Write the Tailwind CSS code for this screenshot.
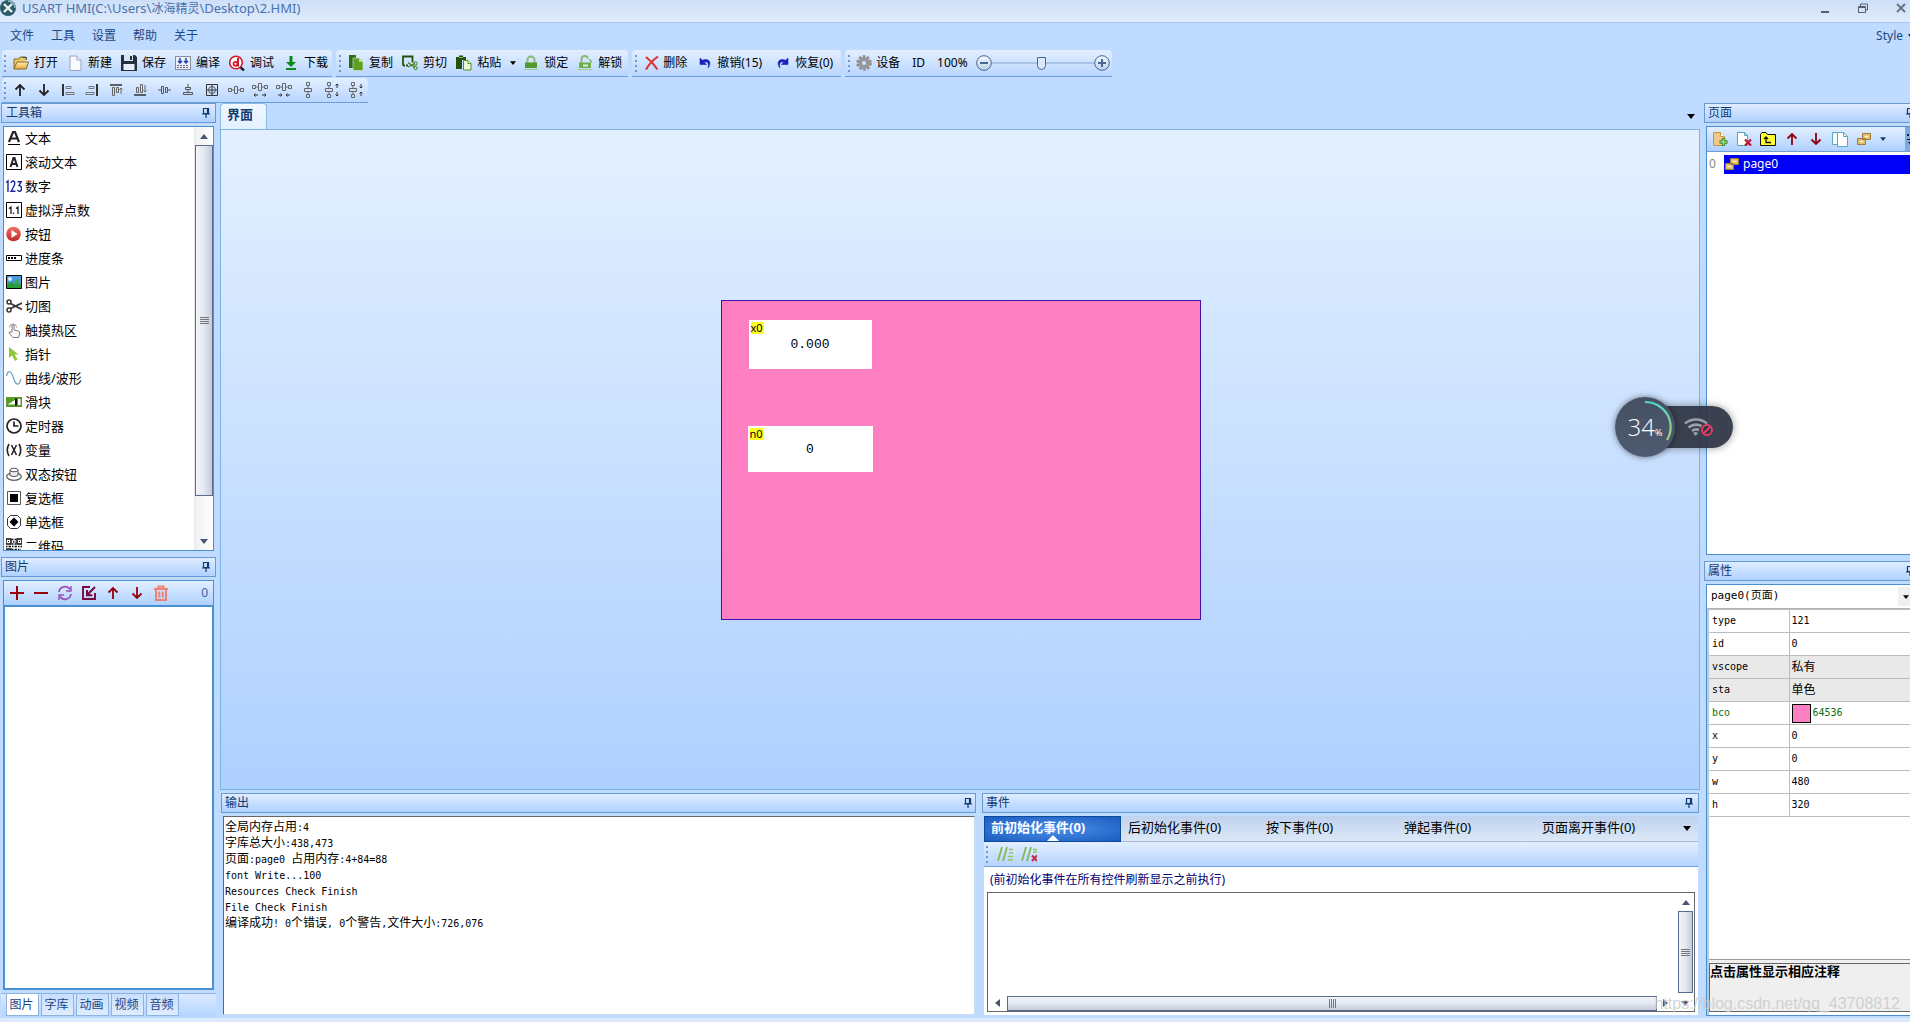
<!DOCTYPE html>
<html lang="zh-CN">
<head>
<meta charset="utf-8">
<title>USART HMI</title>
<script src="https://cdn.jsdelivr.net/npm/@tailwindcss/browser@4"></script>
</head>
<body class="h-screen overflow-hidden bg-[#bfdbff] font-['Noto_Sans','Noto_Sans_CJK_SC',sans-serif] text-xs text-black">

<svg class="absolute h-0 w-0" aria-hidden="true">
  <defs>
    <linearGradient id="g-folder" x1="0" y1="0" x2="0" y2="1"><stop offset="0" stop-color="#fff0b0"/><stop offset="1" stop-color="#e8a83a"/></linearGradient>
    <linearGradient id="g-red" x1="0" y1="0" x2="0" y2="1"><stop offset="0" stop-color="#f07068"/><stop offset="1" stop-color="#c02828"/></linearGradient>
    <linearGradient id="g-knob" x1="0" y1="0" x2="0" y2="1"><stop offset="0" stop-color="#f4f9ff"/><stop offset="1" stop-color="#bcd0ea"/></linearGradient>
    <linearGradient id="g-arc" x1="0" y1="0" x2="0" y2="1"><stop offset="0" stop-color="#4fd8c8"/><stop offset="1" stop-color="#a8d070"/></linearGradient>
  </defs>
  <symbol id="pin" viewBox="0 0 8 10"><path d="M1.5 0.5h5v5h-5zM5.5 0.5v5M0 6h8M4 6v4" fill="none" stroke="#123a70" stroke-width="1.2"/></symbol>
  <symbol id="open" viewBox="0 0 16 16"><path d="M1 14V4h5l1-2h6v3" fill="#f0c860" stroke="#8a6a28"/><path d="M1 14 4 7h11.5L13 14z" fill="url(#g-folder)" stroke="#8a6a28"/><path d="M9 2.5h4.500v2" fill="none" stroke="#555"/></symbol>
  <symbol id="new" viewBox="0 0 16 16"><path d="M3 1h7l4 4v10.500H3z" fill="#f8faff" stroke="#9aa6bb"/><path d="M10 1v4h4" fill="#fff" stroke="#9aa6bb"/></symbol>
  <symbol id="save" viewBox="0 0 16 16"><path d="M0 0h14l2 2v14H0z" fill="#26303c"/><path d="M3 0h9v6H3z" fill="#d6e4f4"/><path d="M9 1h2v4H9z" fill="#26303c"/><path d="M2.500 9h11v6h-11z" fill="#e6eefa"/></symbol>
  <symbol id="compile" viewBox="0 0 16 16"><path d="M.5 1.500h15v13H.5z" fill="#e8effb" stroke="#333" stroke-dasharray="1 1"/><path d="M5 3v5M3 6l2 2 2-2M11 3v5M9 6l2 2 2-2" fill="none" stroke="#2440b0" stroke-width="1.500"/><path d="M2 10.500h12M2 12.500h12" stroke="#667" stroke-dasharray="2 1"/></symbol>
  <symbol id="debug" viewBox="0 0 16 16"><path d="M10 11l5 4.500" stroke="#223" stroke-width="2.500"/><circle cx="7" cy="7.500" r="6.300" fill="#fff" stroke="#d01828" stroke-width="1.600"/><path d="M9 3v8.500" fill="none" stroke="#d01828" stroke-width="2"/><circle cx="6.500" cy="8.800" r="2" fill="none" stroke="#d01828" stroke-width="1.800"/></symbol>
  <symbol id="download" viewBox="0 0 16 16"><path d="M6.500 1h3v6H13l-5 5-5-5h3.500z" fill="#0c8a18"/><path d="M3 13h10v2H3z" fill="#0c8a18"/></symbol>
  <symbol id="copy" viewBox="0 0 16 16"><path d="M1 0h7v2H3v11H1z" fill="#3a7d1a"/><path d="M1 0h5l2 2v11H1z" fill="#2f6a14"/><path d="M5 3h6l4 4v8.500H5z" fill="#5f9e22" stroke="#d9ecd0" stroke-width=".6"/><path d="M11 3v4h4" fill="#b8dc90"/></symbol>
  <symbol id="cut" viewBox="0 0 16 16"><path d="M1 10.500V1.500h9.500v6" fill="none" stroke="#24520e" stroke-width="1.800"/><path d="M1 10.500h5" stroke="#24520e" stroke-width="1.800" stroke-dasharray="2 1"/><path d="M6 7.500l7 5M6 12l7-3.500" stroke="#3a7d1a" stroke-width="1.300"/><circle cx="13.500" cy="8.500" r="1.700" fill="none" stroke="#3a7d1a"/><circle cx="13.500" cy="13" r="1.700" fill="none" stroke="#3a7d1a"/></symbol>
  <symbol id="paste" viewBox="0 0 16 16"><path d="M0 2h3V.5h4V2h3v3H6v9H0z" fill="#24520e"/><path d="M3 2.500h4" stroke="#8fc060"/><path d="M7.500 5.500h4.500l3 3V15H7.500z" fill="#eaf6dc" stroke="#4f9422"/><path d="M12 5.500v3h3" fill="#fff" stroke="#4f9422"/></symbol>
  <symbol id="lock" viewBox="0 0 16 16"><path d="M4.500 8V5a3.500 3.500 0 0 1 7 0v3" fill="none" stroke="#8cb878" stroke-width="2"/><path d="M2 7.500h12V13H2z" fill="#4f9a2a"/><path d="M1 14.500h14" stroke="#a4c896"/></symbol>
  <symbol id="unlock" viewBox="0 0 16 16"><path d="M4.500 8V4.500a3.300 3.300 0 0 1 6.500-1" fill="none" stroke="#8cb878" stroke-width="2"/><path d="M2 7.500h12V13H2z" fill="#6fae4c"/><path d="M6 9.500h5v2H6z" fill="#dcecd2"/><path d="M12 5h2v3" stroke="#6fae4c" fill="none"/><path d="M1 14.500h14" stroke="#a4c896"/></symbol>
  <symbol id="del" viewBox="0 0 16 16"><path d="M2 2c4 3 8 7 11.500 12.500M14 1.500C9 5 5 9 2 14.500" fill="none" stroke="#d83030" stroke-width="2"/></symbol>
  <symbol id="undo" viewBox="0 0 16 16"><path d="M2 3v6.500h6.500L6.300 7.300C9 6 11.500 8 10 13c4-5 1.500-10.500-5.700-7.800z" fill="#1c22b8" stroke="#1c22b8" stroke-width=".6"/></symbol>
  <symbol id="redo" viewBox="0 0 16 16"><path d="M14 3v6.500H7.500l2.200-2.200C7 6 4.500 8 6 13c-4-5-1.500-10.500 5.700-7.800z" fill="#1c22b8" stroke="#1c22b8" stroke-width=".6"/></symbol>
  <symbol id="gear" viewBox="0 0 16 16"><circle cx="8" cy="8" r="6.500" fill="none" stroke="#8e8e8e" stroke-width="2.600" stroke-dasharray="2.600 1.480"/><circle cx="8" cy="8" r="4" fill="none" stroke="#969696" stroke-width="3.800"/></symbol>
  <symbol id="minus" viewBox="0 0 16 16"><circle cx="8" cy="8" r="7.300" fill="url(#g-knob)" stroke="#456791"/><path d="M4 8h8" stroke="#456791" stroke-width="2"/></symbol>
  <symbol id="plus" viewBox="0 0 16 16"><circle cx="8" cy="8" r="7.300" fill="url(#g-knob)" stroke="#456791"/><path d="M4 8h8M8 4v8" stroke="#456791" stroke-width="2"/></symbol>

  <symbol id="up" viewBox="0 0 16 16"><path d="M8 14V3M3.500 7.500 8 3l4.500 4.500" fill="none" stroke="currentColor" stroke-width="1.800"/></symbol>
  <symbol id="down" viewBox="0 0 16 16"><path d="M8 2v11M3.500 8.500 8 13l4.500-4.500" fill="none" stroke="currentColor" stroke-width="1.800"/></symbol>
  <symbol id="al" viewBox="0 0 16 16"><path d="M3 2v12" stroke="#333" stroke-width="2"/><path d="M6 4.500h5v2H6zM6 10.500h8v2H6z" fill="none" stroke="#777"/></symbol>
  <symbol id="ar" viewBox="0 0 16 16"><path d="M13 2v12" stroke="#333" stroke-width="2"/><path d="M5 4.500h5v2H5zM2 10.500h8v2H2z" fill="none" stroke="#777"/></symbol>
  <symbol id="at" viewBox="0 0 16 16"><path d="M2 3h12" stroke="#333" stroke-width="1.500"/><path d="M4.500 5.500h2v8h-2zM8.500 5.500h2v5h-2zM13 6v6M11.500 7.500 13 6l1.500 1.500" fill="none" stroke="#666"/></symbol>
  <symbol id="ab" viewBox="0 0 16 16"><path d="M2 13h12" stroke="#333" stroke-width="1.500"/><path d="M4.500 5.500h2v5h-2zM8.500 2.500h2v8h-2zM13 3v7M11.500 8.500 13 10l1.500-1.500" fill="none" stroke="#666"/></symbol>
  <symbol id="ch" viewBox="0 0 16 16"><path d="M5.500 4.500h2v7h-2zM9.500 5.500h2v5h-2zM2 8h3M12 8h3" fill="none" stroke="#555"/></symbol>
  <symbol id="cv" viewBox="0 0 16 16"><path d="M5.500 5.500h5v2h-5zM3.500 10.500h9v2h-9zM8 2v3M8 8v2" fill="none" stroke="#555"/></symbol>
  <symbol id="cc" viewBox="0 0 16 16"><path d="M2.500 2.500h11v11h-11z" fill="none" stroke="#333"/><path d="M8 2v12M2 8h12" stroke="#333"/><circle cx="8" cy="8" r="3.500" fill="none" stroke="#555"/></symbol>
  <symbol id="h1" viewBox="0 0 16 16"><path d="M.5 6.500h3v3h-3zM6.500 4.500h3v7h-3zM12.500 6.500h3v3h-3zM4 8h2M10 8h2" fill="none" stroke="#666"/></symbol>
  <symbol id="h2" viewBox="0 0 16 16"><path d="M.5 3.500h3v3h-3zM6.500 1.500h3v7h-3zM12.500 3.500h3v3h-3zM4 5h2M10 5h2" fill="none" stroke="#666"/><path d="M2 13h4M10 13h4M3.500 11.500 2 13l1.500 1.500M12.500 11.500 14 13l-1.500 1.500" fill="none" stroke="#333"/></symbol>
  <symbol id="h3" viewBox="0 0 16 16"><path d="M.5 3.500h3v3h-3zM6.500 1.500h3v7h-3zM12.500 3.500h3v3h-3zM4 5h2M10 5h2" fill="none" stroke="#666"/><path d="M2 13h4M10 13h4M4.500 11.500 6 13l-1.500 1.500M11.500 11.500 10 13l1.500 1.500" fill="none" stroke="#333"/></symbol>
  <symbol id="v1" viewBox="0 0 16 16"><path d="M6.500 .5h3v3h-3zM4.500 6.500h7v3h-7zM6.500 12.500h3v3h-3zM8 4v2M8 10v2" fill="none" stroke="#666"/></symbol>
  <symbol id="v2" viewBox="0 0 16 16"><path d="M3.500 .5h3v3h-3zM1.500 6.500h7v3h-7zM3.500 12.500h3v3h-3zM5 4v2M5 10v2" fill="none" stroke="#666"/><path d="M13 2v4M13 10v4M11.500 3.500 13 2l1.500 1.500M11.500 12.500 13 14l1.500-1.500" fill="none" stroke="#333"/></symbol>
  <symbol id="v3" viewBox="0 0 16 16"><path d="M3.500 .5h3v3h-3zM1.500 6.500h7v3h-7zM3.500 12.500h3v3h-3zM5 4v2M5 10v2" fill="none" stroke="#666"/><path d="M13 2v4M13 10v4M11.500 4.500 13 6l1.500-1.500M11.500 11.500 13 10l1.500 1.500" fill="none" stroke="#333"/></symbol>

  <symbol id="t-text" viewBox="0 0 16 16"><path d="M3 12 7 2h2l4 10M5 8.500h6" fill="none" stroke="#222" stroke-width="2.200"/><path d="M2 14.500h12" stroke="#000"/></symbol>
  <symbol id="t-roll" viewBox="0 0 16 16"><path d="M.5 .5h15v15H.5z" fill="#fff" stroke="#000"/><path d="M4.500 13 7.500 4h1l3 9M6 10h4.500" fill="none" stroke="#222" stroke-width="2"/></symbol>
  <symbol id="t-num" viewBox="0 0 16 16"><path d="M0 4.500 2 3v11M5 5q.3-2 2-2t1.800 2.500Q8.500 8 5 13.300h4.500M11.500 3.700h3.700L13 7.500q2.500 0 2.500 3t-2 2.800q-1.500 0-2-1.300" fill="none" stroke="#1c22a0" stroke-width="1.400"/></symbol>
  <symbol id="t-float" viewBox="0 0 16 16"><path d="M.5 .5h15v15H.5z" fill="#fff" stroke="#000"/><path d="M3 6.500 5 5v7M10 6.500 12 5v7M7.500 10.500v1.500" fill="none" stroke="#222" stroke-width="1.300"/></symbol>
  <symbol id="t-btn" viewBox="0 0 16 16"><circle cx="7.500" cy="8" r="7.300" fill="url(#g-red)"/><path d="M5.500 4v8l6-4z" fill="#fff"/></symbol>
  <symbol id="t-prog" viewBox="0 0 16 16"><path d="M.5 5.500h15v5H.5z" fill="#fff" stroke="#000"/><path d="M2 8h9" stroke="#000" stroke-width="2" stroke-dasharray="2 1"/></symbol>
  <symbol id="t-pic" viewBox="0 0 16 16"><path d="M.5 1.500h15v13H.5z" fill="#4a9ae0" stroke="#000"/><path d="M1 14v-4l4-2 4 2 3-1 3 2v3z" fill="#2a9a3a"/><circle cx="4" cy="5" r="2" fill="#d8ecff"/><path d="M7 9l4-4 3 4z" fill="#3aaa50"/></symbol>
  <symbol id="t-scis" viewBox="0 0 16 16"><circle cx="3" cy="4" r="2" fill="none" stroke="#333" stroke-width="1.500"/><circle cx="3" cy="12" r="2" fill="none" stroke="#333" stroke-width="1.500"/><path d="M4.500 5.500 16 11.500M4.500 10.500 16 5" stroke="#333" stroke-width="1.800"/></symbol>
  <symbol id="t-touch" viewBox="0 0 16 16"><path d="M6 10V3.500q1-1.500 2 0V8l4.500 1q1.500.5 1 3l-1 3.500H7L3 11q0-1.500 1.500-1z" fill="#fff" stroke="#777"/><path d="M3.500 5.500a3.500 3.500 0 1 1 7 0" fill="none" stroke="#999"/></symbol>
  <symbol id="t-ptr" viewBox="0 0 16 16"><path d="M3 1v11l3-2.500 3 5.500 2.500-1.500-3-5h4z" fill="#8cc63a"/></symbol>
  <symbol id="t-wave" viewBox="0 0 16 16"><path d="M.5 6C2 0 5 0 7.500 8s5.500 8 7.500 1" fill="none" stroke="#6c9cc0" stroke-width="1.200"/></symbol>
  <symbol id="t-slide" viewBox="0 0 16 16"><path d="M0 3h16v10H0z" fill="#5a9a28"/><path d="M1.500 10.500 9 6v4.500zM12 5h2.500v6H12z" fill="#fff"/><path d="M9 4.500h2v7H9z" fill="#111"/></symbol>
  <symbol id="t-clock" viewBox="0 0 16 16"><circle cx="8" cy="8" r="7" fill="#fff" stroke="#222" stroke-width="1.700"/><path d="M8 3.500V8h4.500" fill="none" stroke="#222" stroke-width="1.700"/></symbol>
  <symbol id="t-var" viewBox="0 0 16 16"><path d="M3 2Q-.5 8 3 14M13 2q3.500 6 0 12M5.500 3l5 10M10.500 3l-5 10" fill="none" stroke="#222" stroke-width="1.600"/></symbol>
  <symbol id="t-dual" viewBox="0 0 16 16"><ellipse cx="8" cy="10.500" rx="7.300" ry="3.800" fill="#fff" stroke="#666" stroke-width="1.300"/><path d="M4 4v5.500q4 2.500 8 0V4" fill="#eee" stroke="#555"/><ellipse cx="8" cy="4" rx="4" ry="1.800" fill="#fff" stroke="#555"/></symbol>
  <symbol id="t-check" viewBox="0 0 16 16"><path d="M1.500 1.500h13v13h-13z" fill="#fff" stroke="#555"/><path d="M4 4h8v8H4z" fill="#000"/></symbol>
  <symbol id="t-radio" viewBox="0 0 16 16"><path d="M4.500 1.500h7l3 3v7l-3 3h-7l-3-3v-7z" fill="#fff" stroke="#333"/><path d="M8 3.500 12.500 8 8 12.500 3.500 8z" fill="#000"/></symbol>
  <symbol id="t-qr" viewBox="0 0 16 16"><path d="M0 1h5v5H0zM11 1h5v5h-5zM0 11h5v5H0z" fill="none" stroke="#111" stroke-width="1.500"/><path d="M2 3h1v1H2zM13 3h1v1h-1z"/><path d="M6 1.500h4M7 4h3M0 8.500h16M6 6h4M6 11.500h9M7 14h8" stroke="#111" stroke-width="1.600" stroke-dasharray="1.500 1 2.500 1"/></symbol>

  <symbol id="add" viewBox="0 0 16 16"><path d="M8 1v14M1 8h14" stroke="#98000c" stroke-width="2"/></symbol>
  <symbol id="rem" viewBox="0 0 16 16"><path d="M1 8h14" stroke="#98000c" stroke-width="2"/></symbol>
  <symbol id="refresh" viewBox="0 0 16 16"><path d="M2 7a6 6 0 0 1 11-2.500M14 9a6 6 0 0 1-11 2.500" fill="none" stroke="#9a50b8" stroke-width="1.700"/><path d="M14 1v5H9M2 15v-5h5" fill="none" stroke="#9a50b8" stroke-width="1.500"/></symbol>
  <symbol id="import" viewBox="0 0 16 16"><path d="M9 2H2v12h12V8" fill="none" stroke="#780840" stroke-width="1.900"/><path d="M14 2 6 10M6 5v5.300h5.300" fill="none" stroke="#780840" stroke-width="2"/></symbol>
  <symbol id="trash" viewBox="0 0 16 16"><path d="M1 4h14M5.500 3.500V1.500h5v2" fill="none" stroke="#f08070" stroke-width="2"/><path d="M3 5v10h10V5M6.300 6.500v6M9.700 6.500v6" fill="none" stroke="#f08070" stroke-width="2"/></symbol>
  <symbol id="p-new" viewBox="0 0 16 16"><path d="M1.500 1.500h7l4 4v9h-11z" fill="#f0c888" stroke="#c89848"/><path d="M8.500 1.500v4h4" fill="#fff" stroke="#c89848"/><path d="M11.500 7v8M7.500 11h8" stroke="#3c8a2c" stroke-width="3.400"/><path d="M11.500 8v6M8.500 11h6" stroke="#a0dc80" stroke-width="1.400"/></symbol>
  <symbol id="p-del" viewBox="0 0 16 16"><path d="M1.500 1.500h7l3 3v10h-10z" fill="#fff" stroke="#58a0b8"/><path d="M8.500 1.500v3h3" fill="none" stroke="#58a0b8"/><path d="M9 8.500l6 6M15 8.500l-6 6" stroke="#c01828" stroke-width="2.200"/></symbol>
  <symbol id="p-up" viewBox="0 0 16 16"><path d="M.5 14.500v-11l1.500-2h4l1.500 2h8v11z" fill="#ffff30" stroke="#111"/><path d="M6 6v5.500h5M4 8l2-2 2 2" fill="none" stroke="#111" stroke-width="1.300"/></symbol>
  <symbol id="p-copy" viewBox="0 0 16 16"><path d="M.5 1.500h7v12h-7z" fill="#f4fbff" stroke="#58a8c0"/><path d="M5.500 1.500h6l4 4v10h-10z" fill="#fff" stroke="#58a8c0"/><path d="M11.500 1.500v4h4" fill="none" stroke="#58a8c0"/></symbol>
  <symbol id="p-link" viewBox="0 0 16 16"><path d="M6.500 2.500h8v6h-8zM1.500 7.500h8v6h-8z" fill="#e0bc68" stroke="#a08038"/><path d="M8.500 5.500h4M3.500 10.500h4" stroke="#fff4c8" stroke-width="1.300"/></symbol>
  <symbol id="e-add" viewBox="0 0 16 16"><path d="M1 15 5 1M6 15l4-14" stroke="#84b850" stroke-width="1.800"/><path d="M12 3.500h4M12 7h4M11 10.500h5M11 14h5" stroke="#94c468" stroke-width="1.300"/></symbol>
  <symbol id="e-del" viewBox="0 0 16 16"><path d="M1 15 5 1M6 15l4-14" stroke="#84b850" stroke-width="1.800"/><path d="M12 3.500h4M12 6h4" stroke="#94c468" stroke-width="1.300"/><path d="M11 9.500l5 5.500M16 9.500 11 15" stroke="#c82840" stroke-width="2"/></symbol>
  <symbol id="tri-d" viewBox="0 0 8 5"><path d="M0 0h8L4 5z" fill="currentColor"/></symbol>
  <symbol id="tri-u" viewBox="0 0 8 5"><path d="M0 5h8L4 0z" fill="currentColor"/></symbol>
  <symbol id="tri-l" viewBox="0 0 5 8"><path d="M5 0v8L0 4z" fill="currentColor"/></symbol>
  <symbol id="tri-r" viewBox="0 0 5 8"><path d="M0 0v8l5-4z" fill="currentColor"/></symbol>
  <symbol id="grip" viewBox="0 0 3 18"><path d="M0 1h2v2H0zM0 6h2v2H0zM0 11h2v2H0zM0 16h2v2H0z" fill="#6f97c8"/></symbol>
</svg>

<div class="flex h-full flex-col">

  <!-- Title bar -->
  <header class="flex h-[23px] shrink-0 items-center border-b border-[#a9c6ea] bg-linear-to-b from-[#cddff8] to-[#e0ebfc]">
    <svg class="-mt-1.5 h-4 w-4" viewBox="0 0 16 16"><circle cx="8" cy="8" r="8" fill="#2a5a66"/><path d="M4 4l8 8M12 4l-8 8" stroke="#e8f4f4" stroke-width="2.400"/><path d="M8 1a7 7 0 0 1 7 7" fill="none" stroke="#8fc0c8" stroke-width="1.500"/></svg>
    <h1 class="-mt-1.5 ml-1.5 flex-1 text-[13px] leading-4 text-[#4a72ad]">USART HMI(C:\Users\<span class="text-xs">冰海精灵</span>\Desktop\2.HMI)</h1>
    <div class="-mt-1.5 flex items-center gap-7 pr-1">
      <button aria-label="最小化"><svg class="h-2.5 w-2.5" viewBox="0 0 10 10"><path d="M1 9h8" stroke="#555f70" stroke-width="2"/></svg></button>
      <button aria-label="还原"><svg class="h-2.5 w-2.5" viewBox="0 0 10 10"><path d="M.5 3.500h7v6h-7zM2.500 3V1h7v6H8M.5 4.500h7" fill="none" stroke="#555f70"/></svg></button>
      <button aria-label="关闭"><svg class="h-2.5 w-2.5" viewBox="0 0 10 10"><path d="M1 1l8 8M9 1 1 9" stroke="#6a7484" stroke-width="2"/></svg></button>
    </div>
  </header>

  <!-- Menu -->
  <nav class="flex h-[27px] shrink-0 items-center overflow-hidden pb-1.5 pl-[10px] pt-1 text-[#1e4684]">
    <div class="flex flex-1 gap-[17px]">
      <button>文件</button><button>工具</button><button>设置</button><button>帮助</button><button>关于</button>
    </div>
    <button class="-mr-1 flex items-center gap-[5px]">Style <svg class="h-1 w-1.5 text-black"><use href="#tri-d"/></svg></button>
  </nav>

  <!-- Main tool bars -->
  <div class="flex h-[27px] shrink-0 gap-1 pl-0.5">
    <div class="flex items-center gap-[9px] rounded-t border-b border-[#6d9fd6] bg-linear-to-b from-[#e3efff] to-[#b8d6ff] pl-0.5 pr-1">
      <svg class="-mr-[3px] h-[18px] w-[3px]"><use href="#grip"/></svg>
      <button class="flex items-center gap-[5px]"><svg class="h-4 w-4"><use href="#open"/></svg>打开</button>
      <button class="flex items-center gap-[5px]"><svg class="h-4 w-4"><use href="#new"/></svg>新建</button>
      <button class="flex items-center gap-[5px]"><svg class="h-4 w-4"><use href="#save"/></svg>保存</button>
      <button class="flex items-center gap-[5px]"><svg class="h-4 w-4"><use href="#compile"/></svg>编译</button>
      <button class="flex items-center gap-[5px]"><svg class="h-4 w-4"><use href="#debug"/></svg>调试</button>
      <button class="flex items-center gap-[5px]"><svg class="h-4 w-4"><use href="#download"/></svg>下载</button>
    </div>
    <div class="flex items-center gap-[9px] rounded-t border-b border-[#6d9fd6] bg-linear-to-b from-[#e3efff] to-[#b8d6ff] pl-[3px] pr-1.5">
      <svg class="-mr-[3px] h-[18px] w-[3px]"><use href="#grip"/></svg>
      <button class="flex items-center gap-[5px]"><svg class="h-4 w-4"><use href="#copy"/></svg>复制</button>
      <button class="flex items-center gap-[5px]"><svg class="h-4 w-4"><use href="#cut"/></svg>剪切</button>
      <button class="flex items-center gap-[5px]"><svg class="h-4 w-4"><use href="#paste"/></svg>粘贴</button>
      <button aria-label="粘贴选项" class="-mr-0.5"><svg class="h-1 w-1.5"><use href="#tri-d"/></svg></button>
      <button class="flex items-center gap-[5px]"><svg class="h-4 w-4"><use href="#lock"/></svg>锁定</button>
      <button class="flex items-center gap-[5px]"><svg class="h-4 w-4"><use href="#unlock"/></svg>解锁</button>
    </div>
    <div class="flex items-center gap-[9px] rounded-t border-b border-[#6d9fd6] bg-linear-to-b from-[#e3efff] to-[#b8d6ff] pl-[3px] pr-2">
      <svg class="-mr-[3px] h-[18px] w-[3px]"><use href="#grip"/></svg>
      <button class="flex items-center gap-[3px]"><svg class="h-4 w-4"><use href="#del"/></svg>删除</button>
      <button class="flex items-center gap-[3px] pl-0.5 pr-[3px]"><svg class="h-4 w-4"><use href="#undo"/></svg>撤销(15)</button>
      <button class="flex items-center gap-[5px]"><svg class="h-4 w-4"><use href="#redo"/></svg>恢复(0)</button>
    </div>
    <div class="flex items-center rounded-t border-b border-[#6d9fd6] bg-linear-to-b from-[#e3efff] to-[#b8d6ff] pl-[3px] pr-0.5">
      <svg class="mr-[5px] h-[18px] w-[3px]"><use href="#grip"/></svg>
      <button class="flex items-center gap-1"><svg class="h-4 w-4"><use href="#gear"/></svg>设备</button>
      <button class="ml-3">ID</button>
      <span class="ml-3">100%</span>
      <button aria-label="缩小" class="ml-2"><svg class="h-4 w-4"><use href="#minus"/></svg></button>
      <input type="range" aria-label="缩放" min="0" max="100" value="49" class="h-4 w-[102px] appearance-none bg-linear-to-b from-transparent from-45% via-[#6d8fbd] via-50% to-transparent to-55% [&::-webkit-slider-thumb]:h-[13px] [&::-webkit-slider-thumb]:w-[9px] [&::-webkit-slider-thumb]:appearance-none [&::-webkit-slider-thumb]:rounded-b-full [&::-webkit-slider-thumb]:border [&::-webkit-slider-thumb]:border-[#456791] [&::-webkit-slider-thumb]:bg-[#dce9fa]">
      <button aria-label="放大"><svg class="h-4 w-4"><use href="#plus"/></svg></button>
    </div>
  </div>
  <div class="flex h-[26px] shrink-0 pl-0.5 pt-px">
    <div class="flex items-center gap-2 rounded-t border-b border-[#6d9fd6] bg-linear-to-b from-[#e3efff] to-[#b8d6ff] pl-0.5 pr-1 text-[#222]">
      <svg class="-mr-[3px] h-[18px] w-[3px]"><use href="#grip"/></svg>
      <button aria-label="上移"><svg class="h-4 w-4"><use href="#up"/></svg></button>
      <button aria-label="下移"><svg class="h-4 w-4"><use href="#down"/></svg></button>
      <button aria-label="左对齐"><svg class="h-4 w-4"><use href="#al"/></svg></button>
      <button aria-label="右对齐"><svg class="h-4 w-4"><use href="#ar"/></svg></button>
      <button aria-label="顶对齐"><svg class="h-4 w-4"><use href="#at"/></svg></button>
      <button aria-label="底对齐"><svg class="h-4 w-4"><use href="#ab"/></svg></button>
      <button aria-label="水平居中"><svg class="h-4 w-4"><use href="#ch"/></svg></button>
      <button aria-label="垂直居中"><svg class="h-4 w-4"><use href="#cv"/></svg></button>
      <button aria-label="居中"><svg class="h-4 w-4"><use href="#cc"/></svg></button>
      <button aria-label="水平等距"><svg class="h-4 w-4"><use href="#h1"/></svg></button>
      <button aria-label="增加水平间距"><svg class="h-4 w-4"><use href="#h2"/></svg></button>
      <button aria-label="减少水平间距"><svg class="h-4 w-4"><use href="#h3"/></svg></button>
      <button aria-label="垂直等距"><svg class="h-4 w-4"><use href="#v1"/></svg></button>
      <button aria-label="增加垂直间距"><svg class="h-4 w-4"><use href="#v2"/></svg></button>
      <button aria-label="减少垂直间距"><svg class="h-4 w-4"><use href="#v3"/></svg></button>
    </div>
  </div>

  <main class="flex min-h-0 flex-1">

    <!-- Left column -->
    <aside class="flex w-[217px] shrink-0 flex-col px-px pb-px">
      <h2 class="flex h-5 shrink-0 items-center justify-between border border-[#6a9ad0] bg-linear-to-b from-[#dfecff] to-[#afd1ff] pl-1 pr-[5px] leading-[18px] text-[#15396f]">工具箱<svg class="h-2.5 w-2"><use href="#pin"/></svg></h2>
      <div class="mx-0.5 mt-[3px] flex h-[425px] shrink-0 border border-[#4a90d0] bg-white">
        <ul class="-mt-px flex-1 overflow-hidden pl-0.5 text-[13px] leading-6 *:flex *:items-center *:gap-[3px]">
          <li><svg class="h-4 w-4"><use href="#t-text"/></svg>文本</li>
          <li><svg class="h-4 w-4"><use href="#t-roll"/></svg>滚动文本</li>
          <li><svg class="h-4 w-4"><use href="#t-num"/></svg>数字</li>
          <li><svg class="h-4 w-4"><use href="#t-float"/></svg>虚拟浮点数</li>
          <li><svg class="h-4 w-4"><use href="#t-btn"/></svg>按钮</li>
          <li><svg class="h-4 w-4"><use href="#t-prog"/></svg>进度条</li>
          <li><svg class="h-4 w-4"><use href="#t-pic"/></svg>图片</li>
          <li><svg class="h-4 w-4"><use href="#t-scis"/></svg>切图</li>
          <li><svg class="h-4 w-4"><use href="#t-touch"/></svg>触摸热区</li>
          <li><svg class="h-4 w-4"><use href="#t-ptr"/></svg>指针</li>
          <li><svg class="h-4 w-4"><use href="#t-wave"/></svg>曲线/波形</li>
          <li><svg class="h-4 w-4"><use href="#t-slide"/></svg>滑块</li>
          <li><svg class="h-4 w-4"><use href="#t-clock"/></svg>定时器</li>
          <li><svg class="h-4 w-4"><use href="#t-var"/></svg>变量</li>
          <li><svg class="h-4 w-4"><use href="#t-dual"/></svg>双态按钮</li>
          <li><svg class="h-4 w-4"><use href="#t-check"/></svg>复选框</li>
          <li><svg class="h-4 w-4"><use href="#t-radio"/></svg>单选框</li>
          <li><svg class="h-4 w-4"><use href="#t-qr"/></svg>二维码</li>
        </ul>
        <div class="flex w-[19px] flex-col items-center border-l border-[#e8e8e8] bg-linear-to-r from-[#f0f0f2] to-white text-[#4a5474]">
          <div class="flex h-[18px] items-center"><svg class="h-[5px] w-2.5"><use href="#tri-u"/></svg></div>
          <div class="flex w-[18px] flex-1 flex-col items-center justify-center gap-px border border-[#5a6a98] bg-linear-to-r from-[#f2f4f8] via-[#e4e8f0] to-[#c4ccd8]">
            <i class="h-px w-[9px] bg-[#777]"></i><i class="h-px w-[9px] bg-[#777]"></i><i class="h-px w-[9px] bg-[#777]"></i><i class="h-px w-[9px] bg-[#777]"></i>
          </div>
          <div class="flex h-[54px] items-end pb-1.5"><svg class="h-[5px] w-2.5"><use href="#tri-d"/></svg></div>
        </div>
      </div>

      <h2 class="mt-1.5 flex h-5 shrink-0 items-center justify-between border border-[#6a9ad0] bg-linear-to-b from-[#dfecff] to-[#afd1ff] pl-[3px] pr-[5px] leading-[18px] text-[#15396f]">图片<svg class="h-2.5 w-2"><use href="#pin"/></svg></h2>
      <div class="mx-0.5 mt-[3px] flex min-h-0 flex-1 flex-col border border-[#4a90d0]">
        <div class="flex h-6 shrink-0 items-center gap-2 bg-linear-to-b from-[#e3efff] to-[#afd1ff] px-[5px] text-[#98000c]">
          <button aria-label="添加"><svg class="h-4 w-4"><use href="#add"/></svg></button>
          <button aria-label="删除图片"><svg class="h-4 w-4"><use href="#rem"/></svg></button>
          <button aria-label="替换"><svg class="h-4 w-4"><use href="#refresh"/></svg></button>
          <button aria-label="导入"><svg class="h-4 w-4"><use href="#import"/></svg></button>
          <button aria-label="图片上移"><svg class="h-4 w-4"><use href="#up"/></svg></button>
          <button aria-label="图片下移"><svg class="h-4 w-4"><use href="#down"/></svg></button>
          <button aria-label="清空"><svg class="h-4 w-4"><use href="#trash"/></svg></button>
          <span class="flex-1 text-right text-[#3a64a4]">0</span>
        </div>
        <div class="flex-1 border border-t-2 border-[#4a90d0] bg-white"></div>
      </div>
      <div class="mt-[3px] flex h-6 shrink-0 gap-0.5 border-t border-[#8db4e0] bg-linear-to-b from-[#dceaff] to-[#b4d4ff] pl-[5px] text-[#1b4585]">
        <button class="h-[22px] w-[33px] border border-t-0 border-[#8db4e0] bg-white pr-0.5">图片</button>
        <button class="h-[22px] w-[33px] border border-t-0 border-[#8db4e0] bg-linear-to-b from-[#c8dffc] to-[#e0ecff] pr-0.5">字库</button>
        <button class="h-[22px] w-[33px] border border-t-0 border-[#8db4e0] bg-linear-to-b from-[#c8dffc] to-[#e0ecff] pr-0.5">动画</button>
        <button class="h-[22px] w-[33px] border border-t-0 border-[#8db4e0] bg-linear-to-b from-[#c8dffc] to-[#e0ecff] pr-0.5">视频</button>
        <button class="h-[22px] w-[33px] border border-t-0 border-[#8db4e0] bg-linear-to-b from-[#c8dffc] to-[#e0ecff] pr-0.5">音频</button>
      </div>
    </aside>

    <!-- Centre column -->
    <section class="ml-[3px] flex min-w-0 flex-1 flex-col pb-[3px]">
      <div class="flex h-[26px] shrink-0 justify-between">
        <button class="-mb-px w-[47px] rounded-t border border-b-0 border-[#8bbbe8] bg-linear-to-b from-[#f0f7ff] to-[#e4f0ff] pb-1 pl-1.5 text-left text-[13px] font-bold text-[#123a6e]">界面</button>
        <button aria-label="页面列表" class="pr-1"><svg class="h-[5px] w-2.5"><use href="#tri-d"/></svg></button>
      </div>
      <div class="flex min-h-0 flex-1 items-center justify-center border border-[#7fb2e4] bg-linear-to-b from-[#e4f0ff] to-[#aed0ff] pl-px">
        <div class="relative h-[320px] w-[480px] border border-[#4010a8] bg-[#ff80c2]">
          <div class="absolute left-[27px] top-[19px] flex h-[49px] w-[123px] items-center justify-center bg-white pt-0.5 font-['Liberation_Mono',monospace] text-[13px]">
            <span class="absolute left-0.5 top-0.5 bg-[#ffff20] pr-px font-['Noto_Sans',sans-serif] text-[11px] leading-3">x0</span>0.000</div>
          <div class="absolute left-[26px] top-[125px] flex h-[46px] w-[125px] items-center justify-center bg-white pt-0.5 font-['Liberation_Mono',monospace] text-[13px]">
            <span class="absolute left-0.5 top-0.5 bg-[#ffff20] pr-px font-['Noto_Sans',sans-serif] text-[11px] leading-3">n0</span>0</div>
        </div>
      </div>

      <div class="mt-[3px] flex h-[222px] shrink-0 gap-1.5">
        <section class="flex w-[756px] shrink-0 flex-col pl-px">
          <h2 class="flex h-5 shrink-0 items-center justify-between border border-[#6a9ad0] bg-linear-to-b from-[#dfecff] to-[#afd1ff] px-[3px] leading-[18px] text-[#15396f]">输出<svg class="h-2.5 w-2"><use href="#pin"/></svg></h2>
          <div role="log" class="ml-0.5 mr-px mt-[3px] flex-1 border border-b-[#c8dcf4] border-l-[#666] border-r-[#c8dcf4] border-t-[#666] bg-white pl-px pt-0.5 leading-4 *:h-4 [&_span]:font-['DejaVu_Sans_Mono',monospace] [&_span]:text-[10px]">
            <p>全局内存占用<span>:4</span></p>
            <p>字库总大小<span>:438,473</span></p>
            <p>页面<span>:page0 </span>占用内存<span>:4+84=88</span></p>
            <p><span>font Write...100</span></p>
            <p><span>Resources Check Finish</span></p>
            <p><span>File Check Finish</span></p>
            <p>编译成功<span>! 0</span>个错误<span>, 0</span>个警告<span>,</span>文件大小<span>:726,076</span></p>
          </div>
        </section>

        <section class="flex min-w-0 flex-1 flex-col pr-px">
          <h2 class="flex h-5 shrink-0 items-center justify-between border border-[#6a9ad0] bg-linear-to-b from-[#dfecff] to-[#afd1ff] pl-[3px] pr-[5px] leading-[18px] text-[#15396f]">事件<svg class="h-2.5 w-2"><use href="#pin"/></svg></h2>
          <div class="ml-0.5 mr-px mt-[3px] flex min-h-0 flex-1 flex-col bg-white">
            <div class="flex h-[26px] shrink-0 items-stretch border-b border-[#a4b8d4] bg-linear-to-b from-[#bfd2ee] to-[#dce8f8] text-[13px] leading-[20px]">
              <button class="relative -mb-px w-[137px] border border-[#0c4a9c] bg-radial from-[#4c90e8] to-[#1a5cc0] pb-1 pl-1.5 text-left font-bold text-white">前初始化事件(0)<span class="absolute bottom-0 left-1/2 h-0 w-0 -translate-x-1/2 border-x-[6px] border-b-[6px] border-x-transparent border-b-white"></span></button>
              <button class="w-[138px] pb-1 pl-[7px] text-left">后初始化事件(0)</button>
              <button class="w-[138px] pb-1 pl-[7px] text-left">按下事件(0)</button>
              <button class="w-[138px] pb-1 pl-[7px] text-left">弹起事件(0)</button>
              <button class="flex-1 pb-1 pl-[7px] text-left">页面离开事件(0)</button>
              <button aria-label="更多事件" class="pr-1.5"><svg class="h-[5px] w-2.5"><use href="#tri-d"/></svg></button>
            </div>
            <div class="flex h-[25px] shrink-0 items-center gap-2 border-b border-[#6d9fd6] bg-linear-to-b from-[#e3efff] to-[#b4d4ff] pl-0.5">
              <svg class="h-[18px] w-[3px]"><use href="#grip"/></svg>
              <button aria-label="注释"><svg class="h-4 w-4"><use href="#e-add"/></svg></button>
              <button aria-label="取消注释"><svg class="h-4 w-4"><use href="#e-del"/></svg></button>
            </div>
            <label for="code" class="h-[25px] shrink-0 pl-1.5 leading-[26px] text-[#000070]">(前初始化事件在所有控件刷新显示之前执行)</label>
            <div class="mx-[3px] mb-[3px] flex min-h-0 flex-1 flex-col border border-[#666]">
              <div class="flex min-h-0 flex-1">
                <textarea id="code" class="flex-1 resize-none outline-none"></textarea>
                <div class="flex w-[17px] flex-col items-center text-[#4a5474]">
                  <div class="flex h-[18px] items-center"><svg class="h-[5px] w-2.5"><use href="#tri-u"/></svg></div>
                  <div class="flex w-[15px] flex-1 flex-col items-center justify-center gap-px border border-[#5a6a98] bg-linear-to-r from-[#f2f4f8] via-[#e4e8f0] to-[#c4ccd8]">
                    <i class="h-px w-[9px] bg-[#777]"></i><i class="h-px w-[9px] bg-[#777]"></i><i class="h-px w-[9px] bg-[#777]"></i><i class="h-px w-[9px] bg-[#777]"></i>
                  </div>
                </div>
              </div>
              <div class="mt-0.5 flex h-4 shrink-0 items-center text-[#4a5474]">
                <svg class="mx-[7px] h-2.5 w-[5px]"><use href="#tri-l"/></svg>
                <div class="flex h-[15px] flex-1 items-center justify-center gap-px border border-[#5a6a98] bg-linear-to-b from-[#f2f4f8] via-[#e4e8f0] to-[#c4ccd8]">
                  <i class="h-[9px] w-px bg-[#777]"></i><i class="h-[9px] w-px bg-[#777]"></i><i class="h-[9px] w-px bg-[#777]"></i><i class="h-[9px] w-px bg-[#777]"></i>
                </div>
                <svg class="mx-1.5 h-2.5 w-[5px]"><use href="#tri-r"/></svg>
                <svg class="ml-1.5 mr-1 h-[5px] w-2.5"><use href="#tri-d"/></svg>
              </div>
            </div>
          </div>
        </section>
      </div>
    </section>

    <!-- Right column -->
    <aside class="ml-1 flex w-[206px] shrink-0 flex-col overflow-hidden">
      <h2 class="flex h-5 shrink-0 items-center justify-between border border-r-0 border-[#6a9ad0] bg-linear-to-b from-[#dfecff] to-[#afd1ff] pl-[3px] leading-[18px] text-[#15396f]">页面<svg class="-mr-1 h-2.5 w-2 shrink-0"><use href="#pin"/></svg></h2>
      <div class="ml-0.5 mt-[3px] h-[429px] shrink-0 border border-r-0 border-[#4a90d0] bg-white">
        <div class="flex h-[25px] items-center gap-2 border-b border-[#6d9fd6] bg-linear-to-b from-[#e3efff] to-[#afd1ff] pl-[5px] text-[#900010]">
          <button aria-label="新建页面"><svg class="h-4 w-4"><use href="#p-new"/></svg></button>
          <button aria-label="删除页面"><svg class="h-4 w-4"><use href="#p-del"/></svg></button>
          <button aria-label="插入页面"><svg class="h-4 w-4"><use href="#p-up"/></svg></button>
          <button aria-label="页面上移"><svg class="h-4 w-4"><use href="#up"/></svg></button>
          <button aria-label="页面下移"><svg class="h-4 w-4"><use href="#down"/></svg></button>
          <button aria-label="复制页面"><svg class="h-4 w-4"><use href="#p-copy"/></svg></button>
          <button aria-label="链接"><svg class="h-4 w-4"><use href="#p-link"/></svg></button>
          <button aria-label="更多"><svg class="h-1 w-1.5 text-[#1c3a6c]"><use href="#tri-d"/></svg></button>
          <button aria-label="工具栏选项" class="ml-auto flex h-full w-[5px] items-center overflow-hidden bg-[#7fa8dc]"><svg class="h-3 w-2 shrink-0" viewBox="0 0 8 12"><path d="M2 1h2v2H2zM2 6h6v1H2zM3 9h5l-2.500 3z" fill="#123"/></svg></button>
        </div>
        <div class="mt-0.5 flex h-5 items-center leading-5">
          <span class="w-[17px] pl-0.5 text-[#888]">0</span>
          <div class="flex h-[19px] flex-1 items-center gap-[3px] bg-[#0000f8] text-white"><svg class="h-4 w-4"><use href="#p-link"/></svg>page0</div>
        </div>
      </div>

      <h2 class="mt-1.5 flex h-5 shrink-0 items-center justify-between border border-r-0 border-[#6a9ad0] bg-linear-to-b from-[#dfecff] to-[#afd1ff] pl-[3px] leading-[18px] text-[#15396f]">属性<svg class="-mr-1 h-2.5 w-2 shrink-0"><use href="#pin"/></svg></h2>
      <div class="ml-0.5 mt-[3px] flex min-h-0 flex-1 flex-col border border-r-0 border-[#4a90d0] bg-white">
        <div class="flex h-[23px] shrink-0 items-center">
          <select aria-label="控件" class="h-[19px] flex-1 appearance-none pl-1 font-['DejaVu_Sans_Mono','Noto_Sans_CJK_SC',monospace] text-[11px] outline-none"><option>page0(页面)</option></select>
          <span class="flex h-[19px] w-3 items-center justify-center bg-[#f0f0f0] pl-1"><svg class="h-1 w-1.5"><use href="#tri-d"/></svg></span>
        </div>
        <div class="flex min-h-0 flex-1 flex-col border-l-2 border-t border-[#b4b4b4] border-l-[#b8ccdc]">
          <table class="w-full table-fixed border-collapse text-left font-['DejaVu_Sans_Mono','Noto_Sans_CJK_SC',monospace] text-[10px] [&_td]:border [&_td]:border-r-0 [&_td]:border-[#bdbdbd] [&_td]:py-0 [&_td]:pl-0.5 [&_th]:w-20 [&_th]:border [&_th]:border-l-0 [&_th]:border-[#bdbdbd] [&_th]:py-0 [&_th]:pl-[3px] [&_th]:font-normal [&_tr]:h-[23px]">
            <tr><th>type</th><td>121</td></tr>
            <tr><th>id</th><td>0</td></tr>
            <tr class="bg-[#e9e9e9]"><th>vscope</th><td class="text-xs leading-4">私有</td></tr>
            <tr class="bg-[#e9e9e9]"><th>sta</th><td class="text-xs leading-4">单色</td></tr>
            <tr class="text-[#107010]"><th>bco</th><td><span class="flex items-center gap-0.5"><i class="h-[19px] w-[19px] border border-black bg-[#ff80c2]"></i>64536</span></td></tr>
            <tr><th>x</th><td>0</td></tr>
            <tr><th>y</th><td>0</td></tr>
            <tr><th>w</th><td>480</td></tr>
            <tr><th>h</th><td>320</td></tr>
          </table>
          <div class="flex-1"></div>
          <div class="h-1 shrink-0 border-t border-[#999] bg-[#f0f0f0]"></div>
          <p class="mb-[3px] h-[49px] shrink-0 border border-r-0 border-[#666] bg-[#efefef] text-[13px] font-bold leading-[14px]">点击属性显示相应注释</p>
        </div>
      </div>
      <div class="h-0.5 shrink-0"></div>
    </aside>
  </main>
  <footer class="h-1 shrink-0 bg-[#dbe9fc]"></footer>
</div>

<!-- Floating network monitor -->
<div class="absolute right-[177px] top-[397px] flex h-[60px] w-[118px] items-center">
  <div class="absolute right-0 flex h-[42px] w-[88px] items-center justify-center rounded-r-full bg-[#303746]/95 pl-5 shadow-[0_0_8px_rgba(0,0,0,0.4)]">
    <svg class="h-[22px] w-8" viewBox="0 0 32 22"><path d="M2 7.500a17 17 0 0 1 22 0M5.500 11.500a12 12 0 0 1 13-1.500M9 15a7 7 0 0 1 7-1" fill="none" stroke="#9aa0aa" stroke-width="2.600"/><path d="M10 17a4 4 0 0 1 5 0l-2.500 3z" fill="#9aa0aa"/><circle cx="24" cy="14" r="5" fill="#303746" stroke="#e83c64" stroke-width="2"/><path d="M21 17l6-6" stroke="#e83c64" stroke-width="2"/></svg>
  </div>
  <div class="relative flex h-[60px] w-[60px] items-center justify-center rounded-full bg-linear-to-b from-[#465063] to-[#4e5a70] text-white shadow-[0_0_6px_rgba(0,0,0,0.5)]">
    <svg class="absolute inset-0 h-full w-full" viewBox="0 0 60 60"><path d="M30 5a25 25 0 0 1 22 38" fill="none" stroke="url(#g-arc)" stroke-width="2.200"/></svg>
    <span class="font-['Open_Sans',sans-serif] text-2xl font-light leading-6">34</span><span class="self-end pb-[18px] text-[9px] leading-3">%</span>
  </div>
</div>

<p class="absolute bottom-2.5 right-2.5 font-['Liberation_Sans',sans-serif] text-base leading-4 text-[#c8c8c8]/80">https://blog.csdn.net/qq_43708812</p>
</body>
</html>
